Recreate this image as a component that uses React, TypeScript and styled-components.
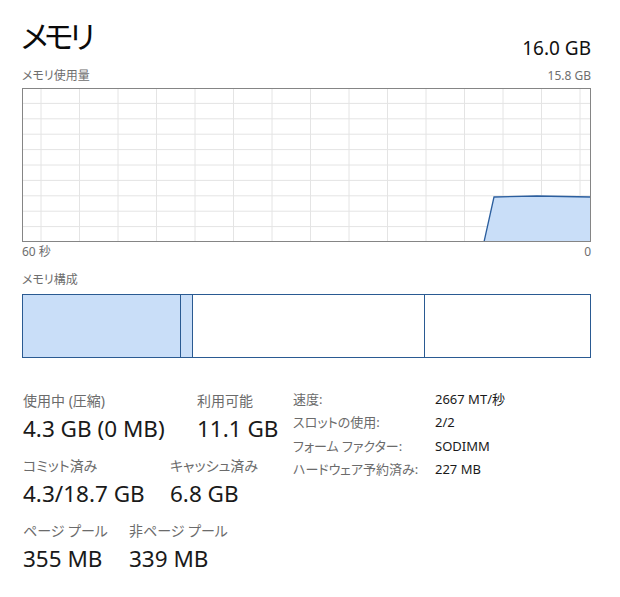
import styled, { createGlobalStyle } from 'styled-components'

const GlobalStyle = createGlobalStyle`
  body {
    margin: 0;
    background: #ffffff;
    font-family: 'Noto Sans', 'Noto Sans CJK JP', sans-serif;
    font-feature-settings: 'palt';
  }
`

// first cell width of each row keeps the columns where Task Manager puts them
const stats = [
  {
    lead: 174,
    items: [
      { label: '使用中 (圧縮)', value: '4.3 GB (0 MB)' },
      { label: '利用可能', value: '11.1 GB' },
    ],
  },
  {
    lead: 147,
    items: [
      { label: 'コミット済み', value: '4.3/18.7 GB' },
      { label: 'キャッシュ済み', value: '6.8 GB' },
    ],
  },
  {
    lead: 106,
    items: [
      { label: 'ページ プール', value: '355 MB' },
      { label: '非ページ プール', value: '339 MB' },
    ],
  },
]

const details = [
  { label: '速度:', value: '2667 MT/秒' },
  { label: 'スロットの使用:', value: '2/2' },
  { label: 'フォーム ファクター:', value: 'SODIMM' },
  { label: 'ハードウェア予約済み:', value: '227 MB' },
]

const CHART_W = 569
const CHART_H = 154

const UsageChart = () => {
  const rows = Array.from({ length: 9 }, (_, i) => ((i + 1) * CHART_H) / 10)
  const cols = Array.from({ length: 15 }, (_, i) => 19 + i * 38.5)
  const area = '462,154 472,109 515,108 569,109 569,154'
  return (
    <svg width={CHART_W} height={CHART_H} viewBox={`0 0 ${CHART_W} ${CHART_H}`}>
      <rect x='0' y='0' width={CHART_W} height={CHART_H} fill='#ffffff' />
      {rows.map((y) => (
        <line key={'h' + y} x1='0' x2={CHART_W} y1={y} y2={y} stroke='#e4e4e4' strokeWidth='1' />
      ))}
      {cols.map((x) => (
        <line key={'v' + x} x1={x} x2={x} y1='0' y2={CHART_H} stroke='#e4e4e4' strokeWidth='1' />
      ))}
      <polygon points={area} fill='#c9def8' />
      <polyline points='462,154 472,109 515,108 569,109' fill='none' stroke='#2b5e9e' strokeWidth='1.3' />
      <rect x='0.5' y='0.5' width={CHART_W - 1} height={CHART_H - 1} fill='none' stroke='#858585' strokeWidth='1' />
    </svg>
  )
}

const App = () => {
  return (
    <PAGE>
      <GlobalStyle />
      <HEADER>
        <TITLE>メモリ</TITLE>
        <TOTAL>16.0 GB</TOTAL>
      </HEADER>
      <CAPTION_ROW>
        <span>メモリ使用量</span>
        <span>15.8 GB</span>
      </CAPTION_ROW>
      <CHART>
        <UsageChart />
      </CHART>
      <CAPTION_ROW>
        <span>60 秒</span>
        <span>0</span>
      </CAPTION_ROW>
      <SECTION_CAPTION>メモリ構成</SECTION_CAPTION>
      <COMPOSITION>
        <SEGMENT $width={158} $filled />
        <SEGMENT $width={12} $filled />
        <SEGMENT $width={232} />
        <SEGMENT $width={0} $grow />
      </COMPOSITION>
      <STATS>
        <STAT_COLUMN>
          {stats.map((row, i) => (
            <STAT_ROW key={i}>
              {row.items.map((s, j) => (
                <STAT key={s.label} $width={j === 0 ? row.lead : undefined}>
                  <STAT_LABEL>{s.label}</STAT_LABEL>
                  <STAT_VALUE>{s.value}</STAT_VALUE>
                </STAT>
              ))}
            </STAT_ROW>
          ))}
        </STAT_COLUMN>
        <DETAILS>
          {details.map((d) => (
            <DETAIL_ROW key={d.label}>
              <DETAIL_LABEL>{d.label}</DETAIL_LABEL>
              <DETAIL_VALUE>{d.value}</DETAIL_VALUE>
            </DETAIL_ROW>
          ))}
        </DETAILS>
      </STATS>
    </PAGE>
  )
}

export default App

const PAGE = styled.div`
  width: 620px;
  height: 597px;
  box-sizing: border-box;
  padding: 14px 29px 0 22px;
  background: #ffffff;
  color: #000000;
  overflow: hidden;
`

const HEADER = styled.div`
  display: flex;
  justify-content: space-between;
  align-items: flex-end;
  height: 52px;
`

const TITLE = styled.h1`
  margin: 0 0 9px -1px;
  font-size: 31px;
  font-weight: 400;
  line-height: 42px;
  letter-spacing: -4px;
  color: #0a0a0a;
`

const TOTAL = styled.div`
  font-size: 19px;
  line-height: 26px;
  color: #111111;
  margin-bottom: 5px;
`

const CAPTION_ROW = styled.div`
  display: flex;
  justify-content: space-between;
  font-size: 12px;
  line-height: 20px;
  color: #6e6e6e;
`

const CHART = styled.div`
  display: flex;
  margin-top: 2px;
  height: 154px;
`

const SECTION_CAPTION = styled.div`
  font-size: 12px;
  line-height: 20px;
  color: #6e6e6e;
  margin-top: 8px;
`

const COMPOSITION = styled.div`
  display: flex;
  height: 64px;
  margin-top: 4px;
  box-sizing: border-box;
  border: 1.5px solid #2a5a92;
`

const SEGMENT = styled.div<{ $width: number; $filled?: boolean; $grow?: boolean }>`
  box-sizing: border-box;
  flex: ${(p) => (p.$grow ? '1 1 auto' : `0 0 ${p.$width}px`)};
  background: ${(p) => (p.$filled ? '#c9def8' : '#ffffff')};
  border-right: ${(p) => (p.$grow ? 'none' : '1.5px solid #2a5a92')};
`

const STATS = styled.div`
  display: flex;
  margin-top: 32px;
`

const STAT_COLUMN = styled.div`
  display: flex;
  flex-direction: column;
  gap: 7px;
  width: 270px;
  padding-left: 1px;
`

const STAT_ROW = styled.div`
  display: flex;
`

const STAT = styled.div<{ $width?: number }>`
  display: flex;
  flex-direction: column;
  flex: ${(p) => (p.$width ? `0 0 ${p.$width}px` : '0 0 auto')};
`

const STAT_LABEL = styled.div`
  font-size: 14px;
  line-height: 22px;
  color: #6b6b6b;
  white-space: nowrap;
`

const STAT_VALUE = styled.div`
  margin-top: -3px;
  font-size: 22.5px;
  line-height: 39px;
  color: #1a1a1a;
  white-space: nowrap;
`

const DETAILS = styled.div`
  display: flex;
  flex-direction: column;
  margin-top: -2px;
`

const DETAIL_ROW = styled.div`
  display: grid;
  grid-template-columns: 142px auto;
  font-size: 13px;
  line-height: 23.3px;
`

const DETAIL_LABEL = styled.div`
  color: #6b6b6b;
  white-space: nowrap;
`

const DETAIL_VALUE = styled.div`
  color: #1a1a1a;
  white-space: nowrap;
`
